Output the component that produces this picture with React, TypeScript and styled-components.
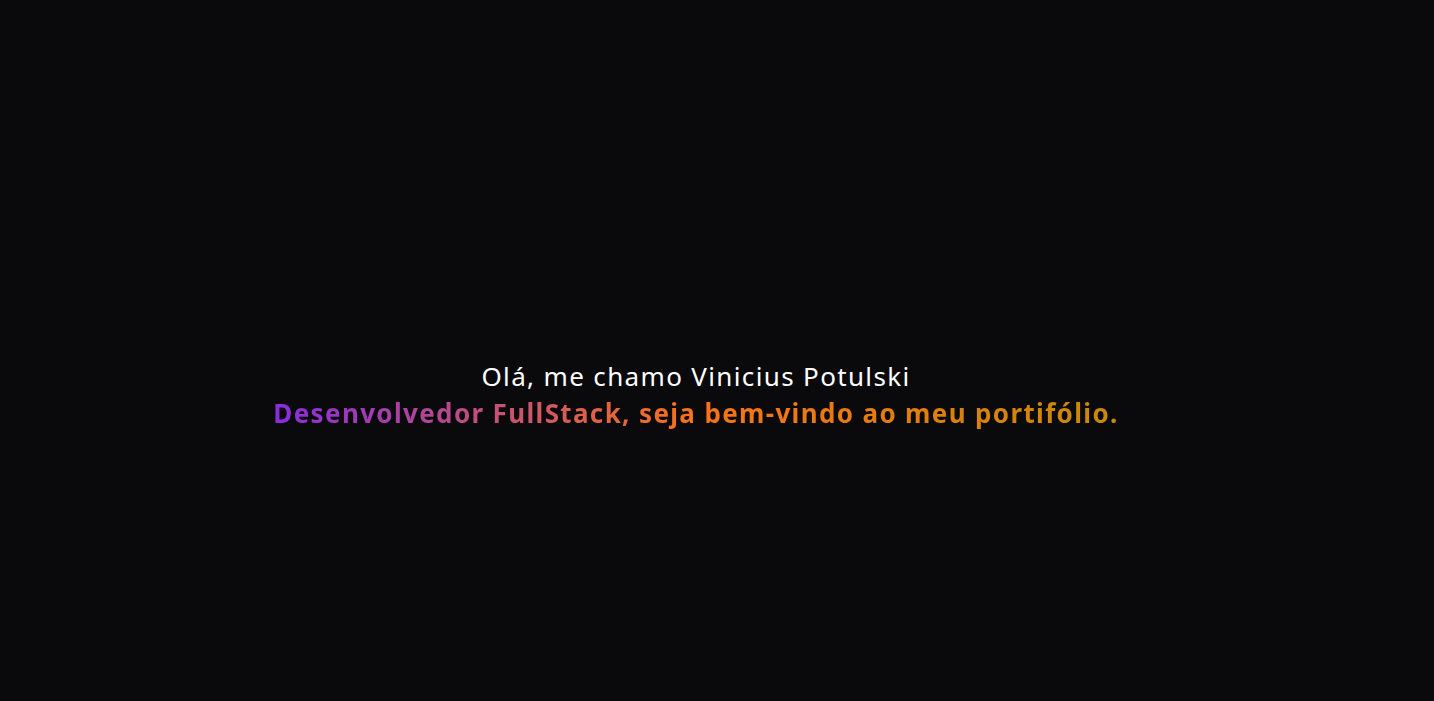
import React from "react";
import styled, { createGlobalStyle } from "styled-components";

const Global = createGlobalStyle`
  html, body { margin: 0; padding: 0; background: #0a0a0c; }
  body { font-family: "Noto Sans", "Open Sans", sans-serif; }
`;

const Page = styled.main`
  box-sizing: border-box;
  min-height: 701px;
  padding: 88px 42px 0 0;
  display: flex;
  flex-direction: column;
  align-items: center;
  justify-content: center;
  background: #0a0a0c;
`;

const Greeting = styled.h1`
  margin: 0;
  font-size: 26px;
  line-height: 37px;
  letter-spacing: 1.35px;
  font-weight: 400;
  color: #ffffff;
  text-align: center;
`;

const Tagline = styled.p`
  margin: 0;
  font-size: 26px;
  line-height: 37px;
  letter-spacing: 1.35px;
  font-weight: 700;
  text-align: center;
  background: linear-gradient(to right, #8a2be2, #f97316, #ca8a04);
  -webkit-background-clip: text;
  background-clip: text;
  color: transparent;
`;

export default function App() {
  return (
    <>
      <Global />
      <Page>
        <Greeting>Olá, me chamo Vinicius Potulski</Greeting>
        <Tagline>Desenvolvedor FullStack, seja bem-vindo ao meu portifólio.</Tagline>
      </Page>
    </>
  );
}
